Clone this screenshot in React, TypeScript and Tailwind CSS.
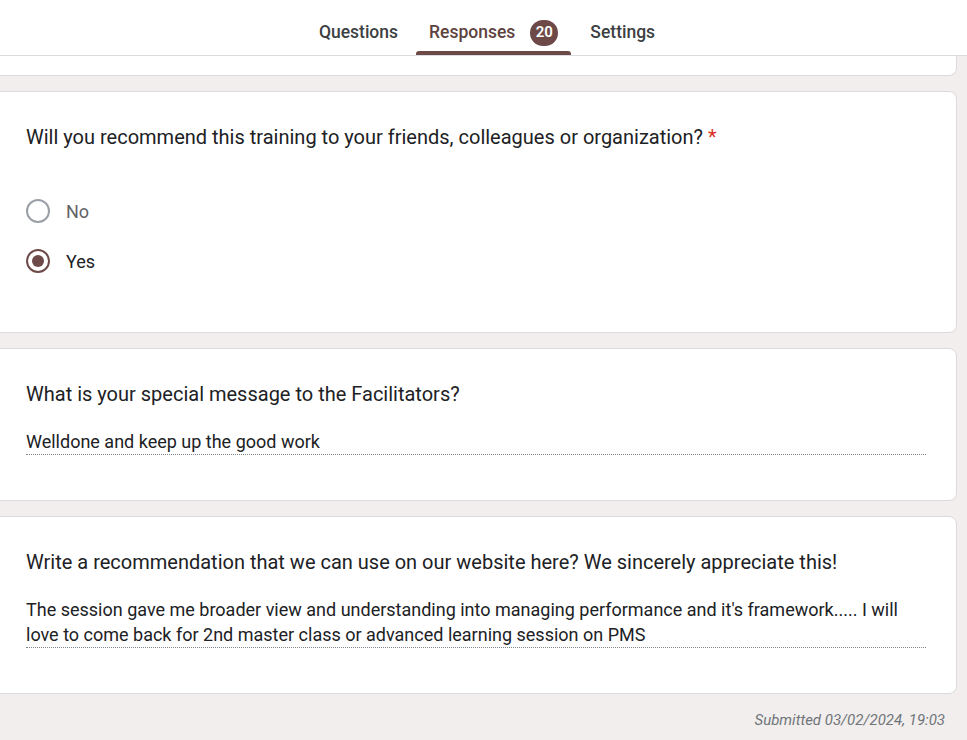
import React from "react";

const font = { fontFamily: "Roboto, 'Liberation Sans', sans-serif" };

function Radio({ label, checked }: { label: string; checked?: boolean }) {
  return (
    <div className="flex items-center h-[24px]">
      <span
        className={
          checked
            ? "w-[24px] h-[24px] rounded-full border-2 border-[#6d4a47] flex items-center justify-center"
            : "w-[24px] h-[24px] rounded-full border-2 border-[#9aa0a6]"
        }
      >
        {checked ? <span className="w-[12px] h-[12px] rounded-full bg-[#6d4a47]" /> : null}
      </span>
      <span className={checked ? "ml-[16px] text-[18px] text-[#202124]" : "ml-[16px] text-[18px] text-[#5f6368]"}>
        {label}
      </span>
    </div>
  );
}

function Answer({ children }: { children: React.ReactNode }) {
  return (
    <div className="text-[18px] leading-[25px] text-[#202124] border-b border-dotted border-[#80868b]">
      {children}
    </div>
  );
}

export default function App() {
  return (
    <div className="min-h-[740px] bg-[#f1eeed] overflow-hidden" style={font}>
      <div className="h-[56px] bg-white border-b border-[#dadce0] flex justify-center pl-[8px]">
        <div className="flex h-full text-[17.5px] font-medium text-[#3c4043]">
          <div className="px-[12px] pt-[10px] h-full flex items-center mx-[3px]">Questions</div>
          <div className="relative h-full flex items-center pt-[10px] px-[13px] mx-[3px] text-[#5d4340]">
            Responses
            <span className="ml-[15px] w-[28px] h-[26px] rounded-full bg-[#6d4a47] text-white text-[15px] font-semibold flex items-center justify-center">
              20
            </span>
            <span className="absolute left-0 right-0 bottom-0 h-[4px] rounded-t-[3px] bg-[#6d4a47]" />
          </div>
          <div className="px-[12px] pt-[10px] h-full flex items-center mx-[4px]">Settings</div>
        </div>
      </div>

      <div className="pr-[10px]">
        <div className="ml-[-10px] h-[20px] bg-white border-x border-b border-[#dadce0] rounded-b-[8px]" />

        <div className="ml-[-10px] mt-[15px] h-[242px] bg-white border border-[#dadce0] rounded-[8px] pl-[35px] pr-[30px] pt-[33px]">
          <div className="text-[20px] leading-[24px] text-[#202124]">
            Will you recommend this training to your friends, colleagues or organization?{" "}
            <span className="text-[#d93025]">*</span>
          </div>
          <div className="mt-[50px] flex flex-col gap-[26px]">
            <Radio label="No" />
            <Radio label="Yes" checked />
          </div>
        </div>

        <div className="ml-[-10px] mt-[15px] h-[153px] bg-white border border-[#dadce0] rounded-[8px] pl-[35px] pr-[30px] pt-[33px]">
          <div className="text-[20px] leading-[24px] text-[#202124]">What is your special message to the Facilitators?</div>
          <div className="mt-[23px]">
            <Answer>Welldone and keep up the good work</Answer>
          </div>
        </div>

        <div className="ml-[-10px] mt-[15px] h-[178px] bg-white border border-[#dadce0] rounded-[8px] pl-[35px] pr-[30px] pt-[33px]">
          <div className="text-[20px] leading-[24px] text-[#202124]">
            Write a recommendation that we can use on our website here? We sincerely appreciate this!
          </div>
          <div className="mt-[23px]">
            <Answer>
              The session gave me broader view and understanding into managing performance and it's framework..... I will love to come back for 2nd master class or advanced learning session on PMS
            </Answer>
          </div>
        </div>

        <div className="text-right pr-[12px] pt-[15px] text-[15px] italic text-[#70757a]">Submitted 03/02/2024, 19:03</div>
      </div>
    </div>
  );
}
